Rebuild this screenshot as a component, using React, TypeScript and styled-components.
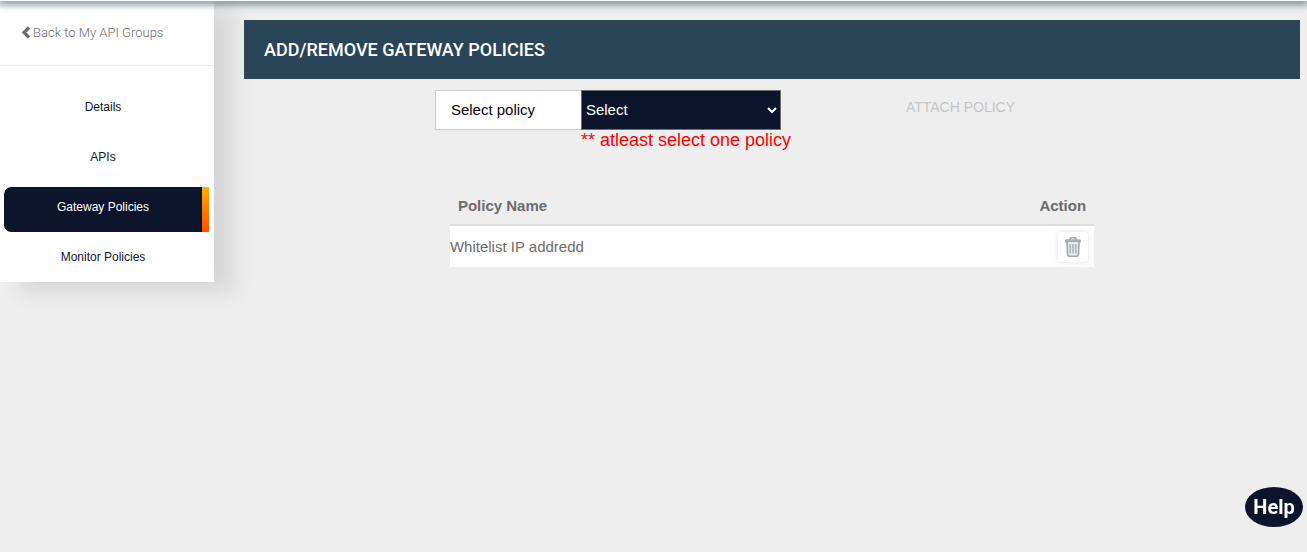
import React from "react";
import styled, { createGlobalStyle } from "styled-components";

const Global = createGlobalStyle`
  *, *::before, *::after { box-sizing: border-box; }
  html { min-height: 100%; background: #eeeeee; }
  body { margin: 0; font-family: "Liberation Sans", Arial, sans-serif; color: #6c6c6c; }
`;

const navy = "#0d152c";

const TopBar = styled.header`
  position: fixed;
  inset: 0 0 auto 0;
  height: 1px;
  background: #ffffff;
  box-shadow: 0 0 8px 2px #2b4558;
  z-index: 3;
`;

const Page = styled.div`
  display: flex;
  align-items: flex-start;
  gap: 30px;
  min-height: 100vh;
  padding-right: 7px;
`;

const Sidebar = styled.aside`
  flex: 0 0 214px;
  background: #ffffff;
  box-shadow: 20px 10px 20px rgba(0, 0, 0, 0.1);
`;

const BackRow = styled.div`
  height: 66px;
  padding: 24px 0 0 21px;
  border-bottom: 1px solid #eaeaea;
`;

const BackLink = styled.a`
  display: flex;
  align-items: center;
  gap: 2px;
  height: 17px;
  font: 300 13px/17px Roboto, sans-serif;
  color: #6c6c6c;
  text-decoration: none;
`;

const Menu = styled.nav`
  display: flex;
  flex-direction: column;
  gap: 5px;
  padding: 21px 5px 0 4px;
`;

const MenuItem = styled.a<{ $active?: boolean }>`
  height: 45px;
  border-right: 7px solid transparent;
  border-radius: 7px 0 0 7px;
  font-size: 12px;
  line-height: 40px;
  text-align: center;
  text-decoration: none;
  color: ${(p) => (p.$active ? "#ffffff" : navy)};
  background: ${(p) =>
    p.$active
      ? `linear-gradient(${navy}, ${navy}) padding-box, linear-gradient(#ffb000, #ff4d00) border-box`
      : "none"};
`;

const Main = styled.main`
  flex: 1;
  min-width: 0;
  padding-top: 20px;
  position: relative;
`;

const Title = styled.h1`
  margin: 0;
  padding: 0 20px;
  background: #2b4558;
  color: #ffffff;
  font: 500 18px/59px Roboto, sans-serif;
`;

const Form = styled.form`
  display: flex;
  justify-content: center;
  align-items: flex-start;
  gap: 125px;
  padding: 11px 94px 0 0;
`;

const Field = styled.div`
  display: grid;
  grid-template-columns: 146px 200px;
`;

const FieldLabel = styled.label`
  height: 40px;
  padding-left: 15px;
  border: 1px solid #cccccc;
  border-right: 0;
  background: #ffffff;
  color: #0b0712;
  font-size: 15px;
  line-height: 38px;
`;

const Select = styled.select`
  height: 40px;
  padding: 0 0 1px;
  border: 1px solid #6d6d6d;
  border-radius: 0;
  background: ${navy};
  color: #ffffff;
  font: 15px "Liberation Sans", Arial, sans-serif;
`;

const FieldError = styled.p`
  grid-column: 2;
  margin: 0;
  color: #ff0000;
  font-size: 18px;
  line-height: 20px;
  white-space: nowrap;
`;

const AttachButton = styled.button`
  height: 34px;
  padding: 0;
  border: 0;
  background: none;
  color: #c6c6c6;
  font: 14px "Liberation Sans", Arial, sans-serif;
`;

const PolicyTable = styled.table`
  width: 61%;
  margin: 36px auto 0;
  border-collapse: collapse;
  font-size: 15px;
`;

const HeadCell = styled.th<{ $end?: boolean }>`
  height: 39px;
  padding: 0 8px;
  border-bottom: 2px solid #dddddd;
  text-align: ${(p) => (p.$end ? "right" : "left")};
`;

const Cell = styled.td<{ $end?: boolean }>`
  height: 42px;
  padding: ${(p) => (p.$end ? "0 6px 0 0" : "0")};
  background: #ffffff;
  text-align: ${(p) => (p.$end ? "right" : "left")};
`;

const DeleteButton = styled.button`
  display: inline-flex;
  align-items: center;
  justify-content: center;
  width: 30px;
  height: 30px;
  padding: 0;
  border: 0;
  border-radius: 3px;
  background: #ffffff;
  box-shadow: 0 0 4px rgba(0, 0, 0, 0.14);
  vertical-align: middle;
`;

const HelpButton = styled.button`
  position: fixed;
  right: 4px;
  bottom: 25px;
  width: 58px;
  height: 40px;
  padding: 0;
  border: 0;
  border-radius: 50%;
  background: ${navy};
  color: #ffffff;
  font: 700 20px Roboto, sans-serif;
`;

const menu = ["Details", "APIs", "Gateway Policies", "Monitor Policies"];

const ChevronIcon = () => (
  <svg width="10" height="14" viewBox="0 0 10 14" aria-hidden="true">
    <path d="M8 1.500 3 6.500l5 5" fill="none" stroke="#6c6c6c" strokeWidth="3.200" />
  </svg>
);

const TrashIcon = () => (
  <svg width="16" height="20" viewBox="0 0 16 20" fill="none" stroke="#a0a5b0" aria-hidden="true">
    <path d="M5 2.700V1.700Q5 .8 6 .8h4q1 0 1 .9v1" strokeWidth="1.500" />
    <path d="M.7 4.500V4Q.7 2.900 2 2.900h12q1.300 0 1.300 1.100v.5z" strokeWidth="1.400" fill="#c9ccd3" />
    <path d="m2 5 .5 12.500Q2.600 19.200 4.200 19.200h7.600q1.600 0 1.700-1.700L14 5" fill="#e8eaee" strokeWidth="1.600" />
    <path d="M5.200 7v9.500M8 7v9.500M10.800 7v9.500" strokeWidth="1.300" />
  </svg>
);

export default function App() {
  return (
    <>
      <Global />
      <TopBar />
      <Page>
        <Sidebar>
          <BackRow>
            <BackLink href="#groups"><ChevronIcon />Back to My API Groups</BackLink>
          </BackRow>
          <Menu>
            {menu.map((name) => (
              <MenuItem key={name} href="#" $active={name === "Gateway Policies"}>{name}</MenuItem>
            ))}
          </Menu>
        </Sidebar>
        <Main>
          <Title>ADD/REMOVE GATEWAY POLICIES</Title>
          <Form>
            <Field>
              <FieldLabel htmlFor="policy">Select policy</FieldLabel>
              <Select id="policy" aria-describedby="policy-error"><option>Select</option></Select>
              <FieldError id="policy-error">** atleast select one policy</FieldError>
            </Field>
            <AttachButton type="button" disabled>ATTACH POLICY</AttachButton>
          </Form>
          <PolicyTable>
            <thead>
              <tr><HeadCell scope="col">Policy Name</HeadCell><HeadCell scope="col" $end>Action</HeadCell></tr>
            </thead>
            <tbody>
              <tr>
                <Cell>Whitelist IP addredd</Cell>
                <Cell $end><DeleteButton type="button" aria-label="Delete policy"><TrashIcon /></DeleteButton></Cell>
              </tr>
            </tbody>
          </PolicyTable>
        </Main>
      </Page>
      <HelpButton type="button">Help</HelpButton>
    </>
  );
}
